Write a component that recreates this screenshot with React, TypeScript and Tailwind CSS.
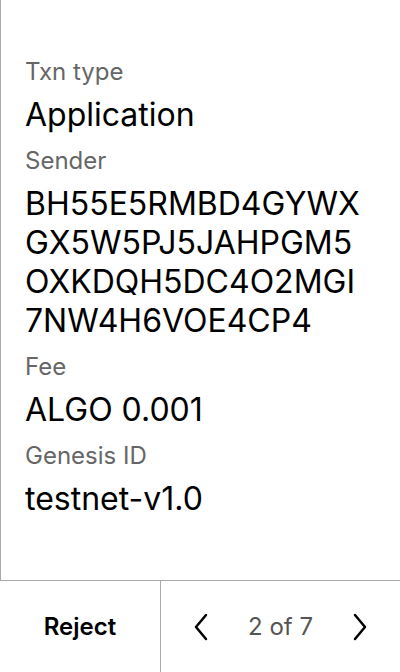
function Chevron({ dir }: { dir: "left" | "right" }) {
  return (
    <svg width="16" height="28" viewBox="0 0 16 28" fill="none" stroke="#000" strokeWidth="2.5" strokeLinecap="round" strokeLinejoin="round">
      {dir === "left" ? <path d="M13 2 L3 14 L13 26" /> : <path d="M3 2 L13 14 L3 26" />}
    </svg>
  );
}

function Field({ label, children }: { label: string; children: React.ReactNode }) {
  return (
    <div className="flex flex-col">
      <div className="mb-[9px] text-[24px] leading-[28px] text-[#666]">{label}</div>
      <div className="text-[32px] leading-[39px] text-black">{children}</div>
    </div>
  );
}

export default function App() {
  return (
    <div className="flex h-[672px] w-[400px] flex-col bg-white" style={{ fontFamily: "Inter, 'Noto Sans', sans-serif" }}>
      <div className="flex flex-1 flex-col gap-[13px] border-l border-[#aaa] pl-[24px] pt-[58px]">
        <Field label="Txn type">Application</Field>
        <Field label="Sender">
          BH55E5RMBD4GYWX
          <br />
          GX5W5PJ5JAHPGM5
          <br />
          OXKDQH5DC4O2MGI
          <br />
          7NW4H6VOE4CP4
        </Field>
        <Field label="Fee">ALGO 0.001</Field>
        <Field label="Genesis ID">testnet-v1.0</Field>
      </div>
      <div className="flex h-[92px] border-t border-[#aaa]">
        <button className="flex w-[161px] items-center justify-center border-r border-[#aaa] text-[24px] font-semibold text-black">
          Reject
        </button>
        <div className="flex flex-1 items-center justify-between px-[32px]">
          <Chevron dir="left" />
          <span className="text-[24px] text-[#555]">2 of 7</span>
          <Chevron dir="right" />
        </div>
      </div>
    </div>
  );
}
